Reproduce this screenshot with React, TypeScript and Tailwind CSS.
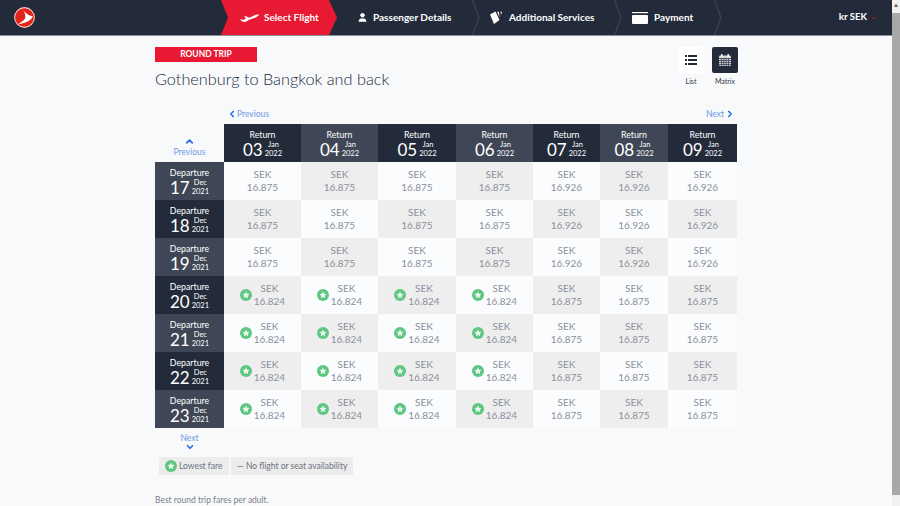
import { ChevronDown, ChevronLeft, ChevronRight, ChevronUp, User } from "lucide-react";

const returns = ["03", "04", "05", "06", "07", "08", "09"];
const departures = ["17", "18", "19", "20", "21", "22", "23"];

// fare per row, then per column
const fares = [
  ["16.875", "16.875", "16.875", "16.875", "16.926", "16.926", "16.926"],
  ["16.875", "16.875", "16.875", "16.875", "16.926", "16.926", "16.926"],
  ["16.875", "16.875", "16.875", "16.875", "16.926", "16.926", "16.926"],
  ["16.824", "16.824", "16.824", "16.824", "16.875", "16.875", "16.875"],
  ["16.824", "16.824", "16.824", "16.824", "16.875", "16.875", "16.875"],
  ["16.824", "16.824", "16.824", "16.824", "16.875", "16.875", "16.875"],
  ["16.824", "16.824", "16.824", "16.824", "16.875", "16.875", "16.875"],
];

function Star({ size = 12 }: { size?: number }) {
  return (
    <svg width={size} height={size} viewBox="0 0 24 24" className="shrink-0">
      <circle cx="12" cy="12" r="12" fill="#5fc682" />
      <path d="M12 5l2.2 4.6 5 .6-3.7 3.4 1 5-4.5-2.5-4.5 2.5 1-5-3.7-3.4 5-.6z" fill="#e9f7ee" />
    </svg>
  );
}

function Logo() {
  return (
    <svg width="21" height="21" viewBox="0 0 24 24">
      <circle cx="12" cy="12" r="11.300" fill="#e2231a" stroke="#f0c9c4" strokeWidth="1.200" />
      <path d="M10.500 3.500C13 7 16.500 10 21.500 10.500C20 15 14 18.500 5 19.500C10 16.500 13 14 13 11.500C13 9 12 6 10.500 3.500Z" fill="#fff" />
    </svg>
  );
}

function Plane() {
  return (
    <svg width="19" height="9" viewBox="0 0 38 18" fill="#fff">
      <path d="M0 13c2 0 4 0 7 .5L12 11 8 7l4-.5 7 3 8-4c3-1.500 8-3 11-2-1 2-4 4-8 6L17 14l-4 3c-5 2-10 0-13-4z" />
    </svg>
  );
}

function Cards() {
  return (
    <svg width="14" height="14" viewBox="0 0 14 14" fill="#fff">
      <path d="M0 3.500L5.500 .5 9.500 9 4 13z" />
      <path d="M7 .5l2 .5 .5 5.500zM10.500 .5l1.500 .5-1 3z" />
    </svg>
  );
}

function Card() {
  return (
    <svg width="16" height="12" viewBox="0 0 16 12" fill="#fff">
      <rect x="0" y="0" width="16" height="1.200" />
      <path d="M0 4a1 1 0 0 1 1-1h14a1 1 0 0 1 1 1v7a1 1 0 0 1-1 1H1a1 1 0 0 1-1-1z" />
    </svg>
  );
}

function Calendar() {
  return (
    <svg width="12" height="12" viewBox="0 0 12 12">
      <rect x="0" y="1.500" width="12" height="10.500" rx="1" fill="#d8d5cc" />
      <rect x="2" y="0" width="1.500" height="3" fill="#fff" />
      <rect x="8.500" y="0" width="1.500" height="3" fill="#fff" />
      <path d="M0 4.500h12M0 6.500h12M0 8.500h12M0 10.500h12M2.500 4v8M4.800 4v8M7.200 4v8M9.500 4v8" stroke="#39405a" strokeWidth="0.800" />
    </svg>
  );
}

function Step({ icon, label, gap, width }: { icon: React.ReactNode; label: string; gap: string; width: string }) {
  return (
    <div className={`relative flex h-full items-center ${gap} ${width}`}>
      {icon}
      <span className="text-[10px] font-bold text-white">{label}</span>
      <svg width="8" height="35" viewBox="0 0 8 35" className="absolute right-0 top-0" fill="none">
        <path d="M0.500 0l6.500 17.500L0.500 35" stroke="#4a5263" strokeWidth="0.800" />
      </svg>
    </div>
  );
}

function DateCell({ label, day, month, year, light }: { label: string; day: string; month: string; year: string; light: boolean }) {
  return (
    <div className={`flex h-[38px] flex-col items-center justify-center pt-[2px] text-white ${light ? "bg-[#3f4655]" : "bg-[#232b3a]"}`}>
      <span className="text-[8.750px] leading-[11px]">{label}</span>
      <div className="flex items-center gap-[2px]">
        <span className="text-[17px] leading-[19px]">{day}</span>
        <span className="flex flex-col items-center text-[7.500px] leading-[8.500px]">
          <span>{month}</span>
          <span>{year}</span>
        </span>
      </div>
    </div>
  );
}

function Fare({ amount, shaded }: { amount: string; shaded: boolean }) {
  const lowest = amount === "16.824";
  return (
    <div className={`flex h-[38px] items-center justify-center gap-[2px] text-[10px] leading-[13px] text-[#8a909c] ${shaded ? "bg-[#eeeeee]" : "bg-[#fbfcfe]"}`}>
      {lowest && <Star />}
      <div className="flex flex-col items-center">
        <span>SEK</span>
        <span>{amount}</span>
      </div>
    </div>
  );
}

export default function App() {
  return (
    <div className="flex h-[506px] w-[900px] overflow-hidden bg-[#f8f9fb] font-['Lato','Noto_Sans',sans-serif]">
      <div className="flex w-[892px] flex-col">
        <header className="flex h-[36px] shrink-0 items-stretch border-b border-[#8b8f97] bg-[#232b3a]">
          <div className="flex w-[221px] items-center pl-[14px]">
            <Logo />
          </div>
          <div className="relative flex w-[116px] items-center gap-[5px] bg-[#e81932] pl-[19px] [clip-path:polygon(0_0,108px_0,116px_50%,108px_100%,0_100%,7px_50%)]">
            <Plane />
            <span className="text-[10px] font-bold text-white">Select Flight</span>
          </div>
          <Step gap="gap-[5px] pl-[20px]" width="w-[143px]" icon={<User size={11} color="#fff" fill="#fff" />} label="Passenger Details" />
          <Step gap="gap-[5px] pl-[10px]" width="w-[142px]" icon={<Cards />} label="Additional Services" />
          <Step gap="gap-[6px] pl-[10px]" width="w-[100px]" icon={<Card />} label="Payment" />
          <div className="ml-auto flex items-center gap-[3px] pr-[14px] text-[9.500px] font-bold text-white">
            <span className="-mt-[2px] mr-[-1px] text-[10px]">kr</span>
            <span>SEK</span>
            <ChevronDown size={8} color="#e81932" />
          </div>
        </header>

        <main className="ml-[155px] flex w-[582px] flex-col">
          <div className="mt-[11px] flex items-start justify-between">
            <div className="flex flex-col">
              <div className="flex h-[15px] w-[102px] items-center justify-center bg-[#e81932] text-[8.500px] font-bold text-white">ROUND TRIP</div>
              <h1 className="mt-[4px] text-[16.300px] font-light leading-[26px] text-[#232b3a]">Gothenburg to Bangkok and back</h1>
            </div>
            <div className="-mr-px flex gap-[8px] text-[7px] text-[#343b4a]">
              <div className="flex flex-col items-center gap-[3px]">
                <div className="flex h-[26px] w-[26px] items-center justify-center rounded-[2px] bg-white">
                  <svg width="12" height="10" viewBox="0 0 12 10" fill="#232b3a">
                    <rect x="0" y="0" width="2" height="2" />
                    <rect x="0" y="4" width="2" height="2" />
                    <rect x="0" y="8" width="2" height="2" />
                    <rect x="3" y="0" width="9" height="2" />
                    <rect x="3" y="4" width="9" height="2" />
                    <rect x="3" y="8" width="9" height="2" />
                  </svg>
                </div>
                <span>List</span>
              </div>
              <div className="flex flex-col items-center gap-[3px]">
                <div className="flex h-[26px] w-[26px] items-center justify-center rounded-[2px] bg-[#232b3a]">
                  <Calendar />
                </div>
                <span>Matrix</span>
              </div>
            </div>
          </div>

          <div className="mt-[15px] flex h-[14px] items-center justify-between pl-[72px] pr-[2px] text-[8.500px] text-[#6d9be6]">
            <div className="flex items-center">
              <ChevronLeft size={10} color="#2a6fdb" strokeWidth={4} />
              <span>Previous</span>
            </div>
            <div className="flex items-center gap-[1px]">
              <span>Next</span>
              <ChevronRight size={10} color="#2a6fdb" strokeWidth={4} />
            </div>
          </div>

          <div className="mt-[3px] grid grid-cols-[69px_77px_77px_78px_77px_67px_68px_69px]">
            <div className="flex h-[38px] flex-col items-center justify-end pb-[4px] text-[8.500px] leading-[11px] text-[#6d9be6]">
              <ChevronUp size={11} color="#2a6fdb" strokeWidth={4} />
              <span>Previous</span>
            </div>
            {returns.map((day, i) => (
              <DateCell key={day} label="Return" day={day} month="Jan" year="2022" light={i % 2 === 1} />
            ))}
            {departures.map((day, r) => (
              <div key={day} className="contents">
                <DateCell label="Departure" day={day} month="Dec" year="2021" light={r % 2 === 0} />
                {fares[r].map((amount, c) => (
                  <Fare key={c} amount={amount} shaded={(r + c) % 2 === 1} />
                ))}
              </div>
            ))}
          </div>

          <div className="mt-[5px] flex w-[69px] flex-col items-center text-[8.500px] leading-[11px] text-[#6d9be6]">
            <span>Next</span>
            <ChevronDown size={10} color="#2a6fdb" strokeWidth={4} className="-mt-[2px]" />
          </div>

          <div className="mt-[5px] ml-[4px] flex gap-[2px] text-[8.500px] text-[#6b7280]">
            <div className="flex h-[18px] w-[70px] items-center gap-[2px] bg-[#ececec] pl-[6px]">
              <Star size={12} />
              <span>Lowest fare</span>
            </div>
            <div className="flex h-[18px] w-[122px] items-center bg-[#ececec] pl-[6px]">— No flight or seat availability</div>
          </div>

          <p className="mt-[19px] text-[8.500px] leading-[12px] text-[#7b818d]">Best round trip fares per adult.</p>
        </main>
      </div>

      <div className="flex w-[8px] flex-col bg-[#f1f1f1]">
        <div className="h-[13px] text-center text-[6px] leading-[10px] text-[#505050]">▲</div>
        <div className="h-[482px] bg-[#a8a8a8]" />
      </div>
    </div>
  );
}
